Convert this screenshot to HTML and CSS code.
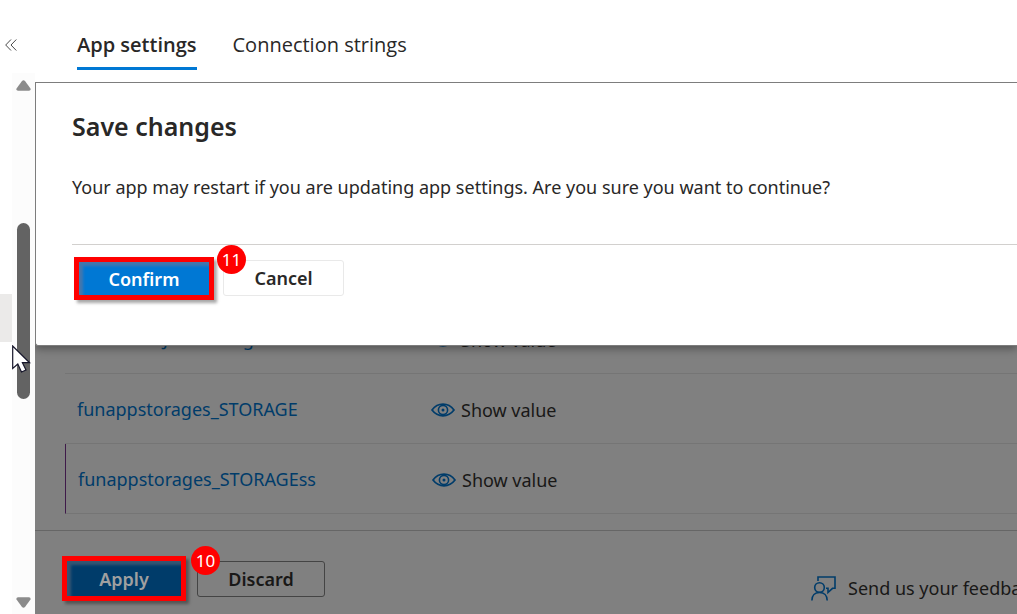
FILE: index.html
```html
<!DOCTYPE html>
<html lang="en">
<head>
<meta charset="utf-8">
<title>App settings</title>
<link rel="stylesheet" href="styles.css">
</head>
<body>
<svg width="0" height="0" class="defs" aria-hidden="true">
  <symbol id="eye" viewBox="0 0 24 14">
    <path d="M1 7C4 3 8 1.200 12 1.200S20 3 23 7C20 11 16 12.800 12 12.800S4 11 1 7Z" fill="none" stroke="currentColor" stroke-width="1.700"/>
    <circle cx="12" cy="7" r="4.600" fill="none" stroke="currentColor" stroke-width="1.600"/>
    <circle cx="12" cy="7" r="1.500" fill="currentColor"/>
  </symbol>
</svg>
<div class="app">
  <aside class="sidebar">
    <button class="collapse" aria-label="Collapse menu">
      <svg width="12" height="12" viewBox="0 0 12 12" fill="none" stroke="#4a4a4a"><path d="M6 .5 .7 6 6 11.500M11.300 .5 6 6l5.300 5.500"/></svg>
    </button>
    <div class="side-body">
      <div class="rail"><div class="selected"></div></div>
      <div class="scrollbar">
        <svg width="15" height="11" viewBox="0 0 15 11"><path d="M6 1Q7.500-.5 9 1L14.500 8.500Q15 10.500 13 10.800H2Q0 10.500.5 8.500Z" fill="#8b8b8b"/></svg>
        <div class="space-above"></div>
        <div class="thumb"></div>
        <div class="space-below"></div>
        <svg width="15" height="11" viewBox="0 0 15 11"><path d="M6 10Q7.500 11.500 9 10L14.500 2.500Q15 .5 13 .2H2Q0 .5.5 2.500Z" fill="#8b8b8b"/></svg>
      </div>
    </div>
    <svg class="cursor" width="19" height="29" viewBox="0 0 19 29"><path d="M.7 1V23.500L5.800 19 9.500 27 14 25 10.400 17.700H17.600Z" fill="#fff" stroke="#15152a" stroke-width="1.200"/></svg>
  </aside>
  <main class="main">
    <nav class="tabs">
      <a href="#app" class="tab active">App settings</a>
      <a href="#conn" class="tab">Connection strings</a>
    </nav>
    <div class="content">
      <table class="settings">
        <tbody>
          <tr><td class="name"><a href="#s1">AzureWebJobsStorage</a></td><td><button class="show"><svg width="24" height="14"><use href="#eye"/></svg>Show value</button></td></tr>
          <tr><td class="name"><a href="#s2">funappstorages_STORAGE</a></td><td><button class="show"><svg width="24" height="14"><use href="#eye"/></svg>Show value</button></td></tr>
          <tr class="changed"><td class="name"><a href="#s3">funappstorages_STORAGEss</a></td><td><button class="show"><svg width="24" height="14"><use href="#eye"/></svg>Show value</button></td></tr>
        </tbody>
      </table>
      <footer class="footer">
        <div class="callout"><button class="btn apply">Apply</button><span class="badge">10</span></div>
        <button class="btn discard">Discard</button>
        <a class="feedback" href="#feedback">
          <svg width="25" height="25" viewBox="0 0 25 25" fill="none" stroke="currentColor" stroke-width="1.600"><circle cx="8.500" cy="11.500" r="4.800"/><path d="M.9 24.500C.9 19.500 4 16.500 8.500 16.500S16.200 19.500 16.200 24.500M7 5V1H24V12.300H21.500L17 16.500V12.300H15"/></svg>
          Send us your feedback
        </a>
      </footer>
      <section class="dialog" role="dialog" aria-labelledby="dlg-title">
        <h2 id="dlg-title">Save changes</h2>
        <p>Your app may restart if you are updating app settings. Are you sure you want to continue?</p>
        <div class="actions">
          <div class="callout"><button class="btn confirm">Confirm</button><span class="badge">11</span></div>
          <button class="btn cancel">Cancel</button>
        </div>
      </section>
    </div>
  </main>
</div>
</body>
</html>
```
FILE: styles.css
```css
* { box-sizing: border-box; }
body {
  margin: 0;
  background: #fff;
  color: #292827;
  font: 18px/28px "Noto Sans", "Open Sans", sans-serif;
  overflow: hidden;
}
button { font: inherit; color: inherit; background: none; border: 0; padding: 0; }
a { color: inherit; text-decoration: none; }
svg { display: block; flex: none; }
.defs { position: absolute; }
.app { display: flex; height: 100vh; }

.sidebar { position: relative; width: 35px; flex: none; display: flex; flex-direction: column; }
.collapse { height: 73px; padding: 17px 0 0 5px; display: flex; align-items: center; }
.side-body { flex: 1; display: flex; }
.rail { width: 12px; padding-top: 221px; }
.selected { height: 48px; background: #ebeae9; }
.scrollbar {
  flex: 1;
  display: flex;
  flex-direction: column;
  align-items: center;
  padding: 7px 0 6px;
  background: #fcfcfc;
}
.space-above { flex: 2; }
.space-below { flex: 3; }
.thumb { width: 13px; height: 176px; border-radius: 7px; background: #636363; }
.cursor { position: absolute; left: 12px; top: 345px; }

.main { flex: 1; min-width: 0; display: flex; flex-direction: column; }
.tabs {
  display: flex;
  gap: 36px;
  height: 82px;
  padding: 31px 42px 12px;
  font-family: "Open Sans", "Noto Sans", sans-serif;
  font-size: 20px;
}
.tab { border-bottom: 3px solid transparent; white-space: nowrap; }
.tab.active { font-weight: 600; border-color: #0078d4; }

.content {
  position: relative;
  flex: 1;
  display: flex;
  flex-direction: column;
  justify-content: flex-end;
  overflow: hidden;
  background: #808080;
  color: #191817;
}
.settings {
  margin: 0 0 16px 30px;
  width: calc(100% - 30px);
  table-layout: fixed;
  border-spacing: 0;
}
.settings td { height: 70px; padding: 2px 0 0; border-bottom: 1px solid #757575; }
.settings .name { width: 366px; padding: 0 0 0 12px; color: #003c6a; }
.settings .changed .name { border-left: 1px solid #3f1a4a; }
.settings .changed td + td { padding-left: 1px; }
.show { display: flex; align-items: center; gap: 6px; }
.show svg, .feedback svg { color: #003c6a; }

.footer {
  display: flex;
  align-items: flex-start;
  height: 84px;
  padding: 25px 0 0 27px;
  border-top: 1px solid #666;
  white-space: nowrap;
}
.callout {
  position: relative;
  flex: none;
  border: 5px solid #f00;
  box-shadow: 3px 3px 3px rgba(0, 0, 0, .35);
}
.badge {
  position: absolute;
  left: calc(100% + 8px);
  top: -17px;
  width: 29px;
  height: 29px;
  border-radius: 50%;
  background: #f00;
  color: #fff;
  font: 17px/29px "Noto Sans", sans-serif;
  text-align: center;
}
.footer .badge { left: calc(100% + 10px); top: -15px; }
.btn { display: block; flex: none; height: 36px; border-radius: 3px; font-weight: 600; text-align: center; }
.apply, .confirm { border-radius: 0; }
.apply { width: 114px; height: 35px; background: #003c6a; color: #a0a0a0; box-shadow: inset 4px 4px 3px #365673; }
.discard { width: 128px; margin: 5px 0 0 11px; border: 1px solid #444; }
.feedback { display: flex; align-items: center; gap: 12px; margin: 18px 0 0 486px; }

.dialog {
  position: absolute;
  inset: 0 0 auto 0;
  padding: 25px 0 45px 36px;
  border: solid #7d7d7d;
  border-width: 1px 0 1px 1px;
  border-radius: 0 0 0 3px;
  background: #fff;
  color: #292827;
  box-shadow: 0 3px 8px rgba(0, 0, 0, .35);
}
h2 { margin: 0; font-size: 25px; line-height: 36px; font-weight: 600; }
p { margin: 29px 0 43px; white-space: nowrap; }
.actions { display: flex; align-items: flex-start; padding: 12px 0 0 2px; border-top: 1px solid #d2d0ce; }
.confirm { width: 130px; height: 33px; background: #0078d4; color: #fff; box-shadow: inset 4px 4px 3px #4577ac; }
.cancel { width: 121px; margin: 3px 0 0 9px; border: 1px solid #e9e9e9; }
```
